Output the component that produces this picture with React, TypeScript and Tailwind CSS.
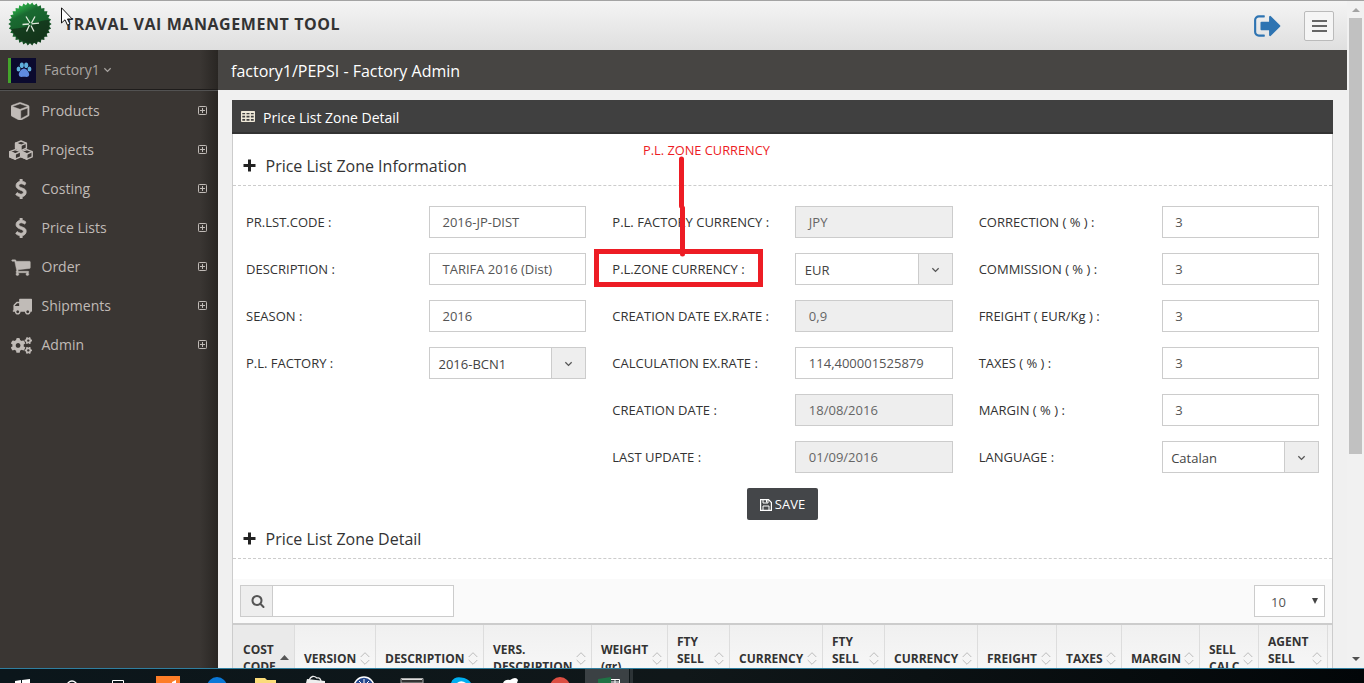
import React from "react";
import { FaCogs } from "react-icons/fa";

const CUBE =
  "M896 1629l640-349v-636l-640 233v752zm-64-865l698-254-698-254-698 254zm832-252v768q0 35-18 65t-49 47l-704 384q-28 16-61 16t-61-16l-704-384q-31-17-49-47t-18-65v-768q0-40 23-73t61-47l704-256q22-8 44-8t44 8l704 256q38 14 61 47t23 73z";
const USD =
  "M1362 1185q0 153-99.5 263.5t-258.5 136.5v175q0 14-9 23t-23 9h-135q-13 0-22.5-9.5t-9.5-22.5v-175q-66-9-127.5-31t-101.5-44.5-74-48-46.5-37.5-17.5-18q-17-21-2-41l103-135q7-10 23-12 15-2 24 9l2 2q113 99 243 125 37 8 74 8 81 0 142.5-43t61.5-122q0-28-15-53t-33.5-42-58.5-37.5-66-32-80-32.5q-39-16-61.5-25t-61.5-26.5-62.5-31-56.5-35.5-53.5-42.5-43.5-49-35.5-58-21-66.5-8.5-78q0-138 98-242t255-134v-180q0-13 9.5-22.5t22.5-9.5h135q14 0 23 9t9 23v176q57 6 110.5 23t87 33.5 63.5 37.5 39 29 15 14q17 18 5 38l-81 146q-8 15-23 16-14 3-27-7-3-3-14.5-12t-39-26.5-58.5-32-74.5-26-85.5-11.5q-95 0-155 43t-60 111q0 26 8.5 48t29.5 41.5 39.5 33 56 31 60.5 27 70 27.5q53 20 81 31.5t76 35 75.5 42.5 62 50 53 63.5 31.5 76.5 13 94z";
const CART =
  "M704 1536q0 52-38 90t-90 38-90-38-38-90 38-90 90-38 90 38 38 90zm896 0q0 52-38 90t-90 38-90-38-38-90 38-90 90-38 90 38 38 90zm128-1088v512q0 24-16.5 42.5t-40.5 21.5l-1044 122q13 60 13 70 0 16-24 64h920q26 0 45 19t19 45-19 45-45 19h-1024q-26 0-45-19t-19-45q0-11 8-31.5t16-36 21.5-40 15.5-29.5l-177-823h-204q-26 0-45-19t-19-45 19-45 45-19h256q16 0 28.5 6.5t19.5 15.5 13 24.5 8 26 5.5 29.5 4.5 26h1201q26 0 45 19t19 45z";
const TRUCK =
  "M640 1408q0-52-38-90t-90-38-90 38-38 90 38 90 90 38 90-38 38-90zm-384-512h384v-256h-158q-13 0-22 9l-195 195q-9 9-9 22v30zm1280 512q0-52-38-90t-90-38-90 38-38 90 38 90 90 38 90-38 38-90zm256-1088v1024q0 15-4 26.5t-13.5 18.5-16.5 11.5-23.5 6-22.5 2-25.5 0-22.5-.5q0 106-75 181t-181 75-181-75-75-181h-384q0 106-75 181t-181 75-181-75-75-181h-64q-3 0-22.5.5t-25.5 0-22.5-2-23.5-6-16.5-11.5-13.5-18.5-4-26.5q0-26 19-45t45-19v-320q0-8-.5-35t0-38 2.5-34.5 6.5-37 14-30.5 22.5-30l198-198q19-19 50.5-32t58.5-13h160v-192q0-26 19-45t45-19h1024q26 0 45 19t19 45z";
const SEARCH =
  "M1216 832q0-185-131.5-316.5t-316.5-131.5-316.5 131.5-131.5 316.5 131.5 316.5 316.5 131.5 316.5-131.5 131.5-316.5zm512 832q0 52-38 90t-90 38q-54 0-90-38l-343-342q-179 124-399 124-143 0-273.5-55.5t-225-150-150-225-55.5-273.5 55.5-273.5 150-225 225-150 273.5-55.5 273.5 55.5 225 150 150 225 55.5 273.5q0 220-124 399l343 343q37 37 37 90z";
const SIGN_OUT =
  "M704 1440q0 4 1 20t.5 26.5-3 23.5-10 19.5-20.5 6.5h-320q-119 0-203.5-84.5t-84.5-203.5v-704q0-119 84.5-203.5t203.5-84.5h320q13 0 22.5 9.5t9.5 22.5q0 4 1 20t.5 26.5-3 23.5-10 19.5-20.5 6.5h-320q-66 0-113 47t-47 113v704q0 66 47 113t113 47h312l11.5 1 11.5 3 8 5.5 7 9 2 13.5zm928-544q0 26-19 45l-544 544q-19 19-45 19t-45-19-19-45v-288h-448q-26 0-45-19t-19-45v-384q0-26 19-45t45-19h448v-288q0-26 19-45t45-19 45 19l544 544q19 19 19 45z";

function Glyph({ d, className }: { d: string; className: string }) {
  return (
    <svg viewBox="0 0 1792 1792" fill="currentColor" className={className}>
      <path d={d} />
    </svg>
  );
}

function CubesIcon() {
  return (
    <svg viewBox="0 0 24 20" fill="none" stroke="currentColor" className="-ml-px h-5 w-6 shrink-0" strokeWidth="1.4" strokeLinejoin="round">
      {[
        [12, 1],
        [6.2, 9.6],
        [17.8, 9.6],
      ].map(([x, y]) => (
        <g key={`${x}-${y}`} transform={`translate(${x} ${y})`}>
          <path d="M0 0L5.4 2.1V7.2L0 9.6L-5.4 7.2V2.1Z" />
          <path d="M-5.4 2.1L0 4.4L5.4 2.1" />
          <path d="M-5.4 2.1L0 4.4V9.6L-5.4 7.2Z" fill="currentColor" />
        </g>
      ))}
    </svg>
  );
}

const DOLLAR_CLASS = "size-[20px] stroke-current stroke-[70]";

const MENU = [
  { label: "Products", icon: <Glyph d={CUBE} className="size-[19.5px] stroke-current stroke-[40]" /> },
  { label: "Projects", icon: <CubesIcon /> },
  { label: "Costing", icon: <Glyph d={USD} className={DOLLAR_CLASS} /> },
  { label: "Price Lists", icon: <Glyph d={USD} className={DOLLAR_CLASS} /> },
  { label: "Order", icon: <Glyph d={CART} className="size-[20px] stroke-current stroke-[40]" /> },
  { label: "Shipments", icon: <Glyph d={TRUCK} className="ml-0.5 size-[20px]" /> },
  { label: "Admin", icon: <FaCogs className="mt-px size-[21px]" /> },
];

function Logo() {
  const pts = Array.from({ length: 60 }, (_, i) => {
    const r = i % 2 ? 19.2 : 21.6;
    const a = (i * Math.PI) / 30;
    return `${(22 + r * Math.cos(a)).toFixed(2)},${(22 + r * Math.sin(a)).toFixed(2)}`;
  }).join(" ");
  return (
    <svg viewBox="0 0 44 44" className="mb-[3px] ml-2 h-11 w-11 shrink-0">
      <defs>
        <linearGradient id="seal" x1="0.1" y1="0" x2="0.6" y2="1">
          <stop offset="0" stopColor="#2fc24e" />
          <stop offset="0.2" stopColor="#25963f" />
          <stop offset="0.32" stopColor="#1a6a31" />
          <stop offset="0.6" stopColor="#17612c" />
          <stop offset="1" stopColor="#123d1c" />
        </linearGradient>
      </defs>
      <polygon points={pts} fill="url(#seal)" />
      <path d="M3 27Q18 26 26 22Q33 18 41 18A19 19 0 0 1 22 41Q8 39 3 27Z" fill="#14301a" opacity="0.75" />
      <path d="M14.500 22.500L21 22M23.500 21.800L31 21.200M18 14.500L22 21M27 14.500L23.500 21M21.500 23L18.500 29.500M23 23.500L26 29.500" stroke="#dfe9dc" strokeWidth="1.3" />
    </svg>
  );
}

function Header() {
  return (
    <header className="flex h-[50px] shrink-0 items-center border-t border-[#a3a3a3] bg-gradient-to-b from-[#f4f4f4] to-[#dfdfdf]">
      <Logo />
      <h1 className="mb-[4px] ml-[12px] text-[16px] font-bold tracking-[0.57px] whitespace-nowrap text-[#333]">TRAVAL VAI MANAGEMENT TOOL</h1>
      <Glyph d={SIGN_OUT} className="mt-px ml-auto size-[30px] text-[#2e74b2]" />
      <button className="mr-[13px] ml-[21px] flex h-[30px] w-[30px] flex-col items-center justify-center gap-[3px] rounded-[2px] border border-[#bbb] bg-[#f5f5f5]">
        <span className="h-[2px] w-[15px] bg-[#666]" />
        <span className="h-[2px] w-[15px] bg-[#666]" />
        <span className="h-[2px] w-[15px] bg-[#666]" />
      </button>
    </header>
  );
}

function Chevron({ className }: { className: string }) {
  return (
    <svg viewBox="0 0 10 6" fill="none" stroke="currentColor" strokeWidth="1.4" className={className}>
      <path d="M1.500 1L5 4.500L8.500 1" />
    </svg>
  );
}

function Sidebar() {
  return (
    <aside className="flex w-[218px] shrink-0 flex-col bg-[linear-gradient(to_right,#3a3633_200px,#292623)] text-[#c0bbb7]">
      <div className="flex h-[40px] items-center border-b border-[#1e1c1b] pl-2 text-[#a8a4a1]">
        <span className="mt-px flex h-[25px] w-[28px] items-center justify-center border-l-[3px] border-[#44a52b] bg-[#0b0a2e]">
          <svg viewBox="0 0 16 16" className="h-4 w-4" fill="#5fb0dc">
            <ellipse cx="2.500" cy="7" rx="1.900" ry="2.500" />
            <ellipse cx="5.800" cy="3.200" rx="2" ry="2.800" />
            <ellipse cx="10.200" cy="3.200" rx="2" ry="2.800" />
            <ellipse cx="13.500" cy="7" rx="1.900" ry="2.500" />
            <path d="M8 6.600C10.500 6.600 13.400 10.500 13.200 12.800C12.800 15.800 10 14.800 8 14.800C6 14.800 3.200 15.800 2.800 12.800C2.600 10.500 5.500 6.600 8 6.600Z" fill="#5f8be0" />
          </svg>
        </span>
        <span className="ml-2 text-[14px]">Factory1</span>
        <Chevron className="mt-px ml-[3px] h-[6px] w-[9px]" />
      </div>
      <nav className="flex flex-col border-t border-[#525252]">
        {MENU.map((m) => (
          <a key={m.label} className="flex h-[39px] items-center pr-[11px] pl-[9px]">
            <span className="flex w-6 justify-center">{m.icon}</span>
            <span className="ml-[8.500px] text-[14px]">{m.label}</span>
            <svg viewBox="0 0 9 9" fill="none" stroke="currentColor" className="ml-auto h-[9px] w-[9px]">
              <rect x="0.500" y="0.500" width="8" height="8" rx="0.800" />
              <path d="M2 4.500H7M4.500 2V7" />
            </svg>
          </a>
        ))}
      </nav>
    </aside>
  );
}

type Field = { label: string; value: string; kind?: "disabled" | "select" };
const COLUMNS: Field[][] = [
  [
    { label: "PR.LST.CODE :", value: "2016-JP-DIST" },
    { label: "DESCRIPTION :", value: "TARIFA 2016 (Dist)" },
    { label: "SEASON :", value: "2016" },
    { label: "P.L. FACTORY :", value: "2016-BCN1", kind: "select" },
  ],
  [
    { label: "P.L. FACTORY CURRENCY :", value: "JPY", kind: "disabled" },
    { label: "P.L.ZONE CURRENCY :", value: "EUR", kind: "select" },
    { label: "CREATION DATE EX.RATE :", value: "0,9", kind: "disabled" },
    { label: "CALCULATION EX.RATE :", value: "114,400001525879" },
    { label: "CREATION DATE :", value: "18/08/2016", kind: "disabled" },
    { label: "LAST UPDATE :", value: "01/09/2016", kind: "disabled" },
  ],
  [
    { label: "CORRECTION ( % ) :", value: "3" },
    { label: "COMMISSION ( % ) :", value: "3" },
    { label: "FREIGHT ( EUR/Kg ) :", value: "3" },
    { label: "TAXES ( % ) :", value: "3" },
    { label: "MARGIN ( % ) :", value: "3" },
    { label: "LANGUAGE :", value: "Catalan", kind: "select" },
  ],
];

function Control({ field }: { field: Field }) {
  if (field.kind === "select") {
    return (
      <div className="flex h-8 flex-1 border border-[#ccc] bg-white text-[13px] text-[#444]">
        <span className="flex-1 pt-[7px] pl-[8.500px] leading-[18px]">{field.value}</span>
        <span className="flex w-[34px] items-center justify-center border-l border-[#ccc] bg-[#eee] text-[#555]">
          <Chevron className="mt-[2px] h-[6px] w-[9px]" />
        </span>
      </div>
    );
  }
  return (
    <div
      className={
        field.kind === "disabled"
          ? "flex h-8 flex-1 items-center border border-[#ccc] bg-[#eee] pt-[2px] pl-[12.500px] text-[13px] text-[#666]"
          : "flex h-8 flex-1 items-center border border-[#ccc] bg-white pt-[2px] pl-[12.500px] text-[13px] text-[#555]"
      }
    >
      {field.value}
    </div>
  );
}

function SectionTitle({ children }: { children: React.ReactNode }) {
  return (
    <h2 className="flex h-[39px] items-center border-b border-dashed border-[#ccc] pb-px pl-[10px] text-[16px] text-[#333]">
      <svg viewBox="0 0 13 13" className="h-[13px] w-[13px] text-[#222]" fill="currentColor">
        <path d="M5 0.500H8V5H12.500V8H8V12.500H5V8H0.500V5H5Z" />
      </svg>
      <span className="ml-[9.500px]">{children}</span>
    </h2>
  );
}

const HEADS = [
  { lines: ["COST", "CODE"], w: "w-[62px]" },
  { lines: ["VERSION"], w: "w-[81px]" },
  { lines: ["DESCRIPTION"], w: "w-[108px]" },
  { lines: ["VERS.", "DESCRIPTION"], w: "w-[108px]" },
  { lines: ["WEIGHT", "(gr)"], w: "w-[76px]" },
  { lines: ["FTY", "SELL", "PRICE"], w: "w-[62px]" },
  { lines: ["CURRENCY"], w: "w-[93px]" },
  { lines: ["FTY", "SELL", "CALC"], w: "w-[62px]" },
  { lines: ["CURRENCY"], w: "w-[93px]" },
  { lines: ["FREIGHT"], w: "w-[79px]" },
  { lines: ["TAXES"], w: "w-[65px]" },
  { lines: ["MARGIN"], w: "w-[78px]" },
  { lines: ["SELL", "CALC"], w: "w-[59px]" },
  { lines: ["AGENT", "SELL", "CALC"], w: "w-[69px]" },
];

function TableHead() {
  return (
    <div className="flex h-[69px] shrink-0 border-t-2 border-[#ccc] bg-gradient-to-b from-[#f0f0f0] to-[#fafafa]">
      {HEADS.map((h, i) => (
        <div
          key={i}
          className={`${h.w} ${i === 0 ? "bg-[#eaeaea] pl-[10px]" : "pl-[9px]"} flex shrink-0 items-center justify-between border-r border-[#ddd] pr-[5px] text-[12px] leading-[17px] font-bold text-[#333]`}
        >
          <span className={`${h.lines.length === 2 ? "pb-[2px]" : ""} flex flex-col whitespace-nowrap`}>
            {h.lines.map((l) => (
              <span key={l}>{l}</span>
            ))}
          </span>
          {i === 0 ? (
            <svg viewBox="0 0 9 5" className="mt-[-2px] h-[5px] w-[9px] shrink-0">
              <path d="M0 5L4.500 0L9 5Z" fill="#555" />
            </svg>
          ) : (
            <svg viewBox="0 0 10 13" fill="none" stroke="#bbb" className="-ml-1 h-[13px] w-[10px] shrink-0">
              <path d="M0.700 5L5 0.700L9.300 5M0.700 8L5 12.300L9.300 8" />
            </svg>
          )}
        </div>
      ))}
    </div>
  );
}

function Panel() {
  return (
    <section className="mt-[10px] ml-[14px] flex w-[1101px] flex-col">
      <div className="flex h-[34px] shrink-0 items-center border-b-2 border-[#333] bg-[#404040] pt-[2px] pl-[9px] text-[14px] text-white">
        <svg viewBox="0 0 14 11" className="mb-[2px] h-[11px] w-[14px]" fill="none" stroke="#eee8d8" strokeWidth="1.400">
          <rect x="0.600" y="0.600" width="12.800" height="9.800" rx="0.800" />
          <path d="M0.600 1.200H13.400M0.600 4H13.400M0.600 7.200H13.400M4.800 0.600V10.400M9.200 0.600V10.400" />
        </svg>
        <span className="mt-px ml-2">Price List Zone Detail</span>
      </div>
      <div className="flex flex-1 flex-col border-x border-[#ccc] bg-white">
        <div className="pt-[13px]">
          <SectionTitle>Price List Zone Information</SectionTitle>
        </div>
        <div className="mt-5 grid h-[282px] grid-cols-3">
          {COLUMNS.map((col, i) => (
            <div key={i} className="flex flex-col gap-[15px] pr-[13px] pl-[13px]">
              {col.map((f) => (
                <div key={f.label} className="flex items-center">
                  <span className="w-[183px] pt-[2px] text-[13px] whitespace-nowrap text-[#333]">{f.label}</span>
                  <Control field={f} />
                </div>
              ))}
            </div>
          ))}
        </div>
        <button className="flex h-8 w-[71px] shrink-0 items-center justify-center gap-[3px] self-center rounded-[2px] bg-[#444649] pt-px text-[13px] text-white">
          <svg viewBox="0 0 12 12" fill="none" stroke="currentColor" className="h-[12px] w-[12px]">
            <path d="M0.600 0.600H8.500L11.400 3.500V11.400H0.600Z" strokeWidth="1.200" />
            <path d="M3 0.600V4H8V0.600M3 11V7H9V11" />
            <path d="M6.500 1V3.500" />
          </svg>
          <span className="mt-px">SAVE</span>
        </button>
        <SectionTitle>Price List Zone Detail</SectionTitle>
        <div className="mt-5 flex h-[44px] shrink-0 items-start justify-between bg-[#fafafa] pt-[6px] pr-[7px] pl-[7px]">
          <div className="flex h-8 w-[214px] border border-[#ccc] bg-white">
            <span className="flex w-[32px] items-center justify-center border-r border-[#ccc] bg-[#eee] text-[#555]">
              <Glyph d={SEARCH} className="ml-[2px] size-[14px]" />
            </span>
          </div>
          <div className="flex h-8 w-[71px] items-center justify-between border border-[#ccc] bg-white pr-[6px] pl-[16px] text-[13px] text-[#555]">
            <span className="mt-[3px]">10</span>
            <svg viewBox="0 0 6 6" className="h-[6px] w-[6px]">
              <path d="M0 0H6L3 6Z" fill="#444" />
            </svg>
          </div>
        </div>
        <TableHead />
      </div>
    </section>
  );
}

function ScrollBar() {
  return (
    <div className="flex w-[17px] shrink-0 flex-col items-center justify-between border-t border-[#a3a3a3] bg-[#f1f1f1] pb-[7px]">
      <div className="flex flex-col items-center">
        <svg viewBox="0 0 8 4" className="mt-[7px] h-1 w-2">
          <path d="M0 4L4 0L8 4Z" fill="#a3a3a3" />
        </svg>
        <div className="mt-[6px] h-[436px] w-[13px] bg-[#c1c1c1]" />
      </div>
      <svg viewBox="0 0 8 4" className="h-1 w-2">
        <path d="M0 0L4 4L8 0Z" fill="#505050" />
      </svg>
    </div>
  );
}

function Taskbar() {
  return (
    <footer className="flex h-[15px] shrink-0 border-t border-[#2f7fa0] bg-[linear-gradient(to_right,#0b161b,#101719_50%,#020608)]">
      <svg viewBox="0 0 1364 14" className="h-[14px] w-[1364px]">
        <path d="M15 12L21 11V14H15ZM22 11L30 10V14H22Z" fill="#fff" />
        <circle cx="72" cy="17" r="5" fill="none" stroke="#fff" strokeWidth="1.300" />
        <path d="M112.500 14V11.500H123.500V14" fill="none" stroke="#fff" />
        <rect x="156" y="7" width="24" height="7" fill="#fd7d27" />
        <path d="M172 13L176 11V14H172Z" fill="#fff" />
        <circle cx="217" cy="18" r="10" fill="#0a78d7" />
        <path d="M255 9H265L267 11H276V14H255Z" fill="#fbdc7a" />
        <path d="M306 14L307 10L325 12V14Z" fill="#eee" />
        <path d="M309 11Q312 5 317 9Q320 8 321 12" fill="none" stroke="#eee" strokeWidth="1.300" />
        <circle cx="364" cy="18" r="10" fill="#23468c" stroke="#fff" strokeWidth="1.500" />
        <path d="M364 10V14M359 12L361 14M369 12L367 14" stroke="#fff" />
        <path d="M401 9.500H423V14H401Z" fill="#333" stroke="#aaa" />
        <path d="M402 10.500H422" stroke="#ddd" />
        <path d="M451 14A8 7 0 0 1 461 8.500Q468 9 471 14Z" fill="#00aff0" />
        <path d="M457 14Q461 10.500 466 14Z" fill="#fff" />
        <path d="M503 14Q505 10 510 11Q516 7 518 11L517 14Z" fill="#fff" />
        <circle cx="560" cy="18" r="10" fill="#dc4f43" />
        <rect x="585" width="44" height="14" fill="#3b4144" />
        <rect x="630" width="3" height="14" fill="#2c3336" />
        <path d="M598 10L611 8V14H598Z" fill="#1f7345" />
        <path d="M611 10.500H619.500V14M611 13H619M615 10.500V14" fill="none" stroke="#fff" />
      </svg>
    </footer>
  );
}

export default function App() {
  return (
    <div className="relative flex h-[683px] w-[1364px] flex-col overflow-hidden font-['Open_Sans',sans-serif]">
      <div className="flex h-[668px] shrink-0 overflow-hidden">
        <div className="flex w-[1347px] shrink-0 flex-col">
          <Header />
          <div className="flex h-[618px]">
            <Sidebar />
            <main className="flex flex-1 flex-col overflow-hidden bg-[#f0f0f0]">
              <div className="flex h-10 shrink-0 items-center bg-[#474543] pt-[2px] pl-[13px] text-[16px] text-white">
                factory1/PEPSI - Factory Admin
              </div>
              <Panel />
            </main>
          </div>
        </div>
        <ScrollBar />
      </div>
      <Taskbar />
      <span className="absolute top-[141px] left-[643px] text-[12.8px] leading-[18px] whitespace-nowrap text-[#ed1c24]">P.L. ZONE CURRENCY</span>
      <svg viewBox="0 0 170 132" className="absolute top-[156px] left-[593px] h-[132px] w-[170px]" fill="none" stroke="#ed1c24" strokeWidth="5">
        <path d="M88.500 3V50M89.500 52V98" strokeLinecap="round" />
        <rect x="3.500" y="95.500" width="164" height="33" />
      </svg>
      <svg viewBox="0 0 12 19" className="absolute top-[7px] left-[61px] h-[19px] w-[12px]">
        <path d="M0.500 0.800V16L4 12.800L6.500 18.200L9 17L6.500 12H11.200Z" fill="#fff" stroke="#111" />
      </svg>
    </div>
  );
}
